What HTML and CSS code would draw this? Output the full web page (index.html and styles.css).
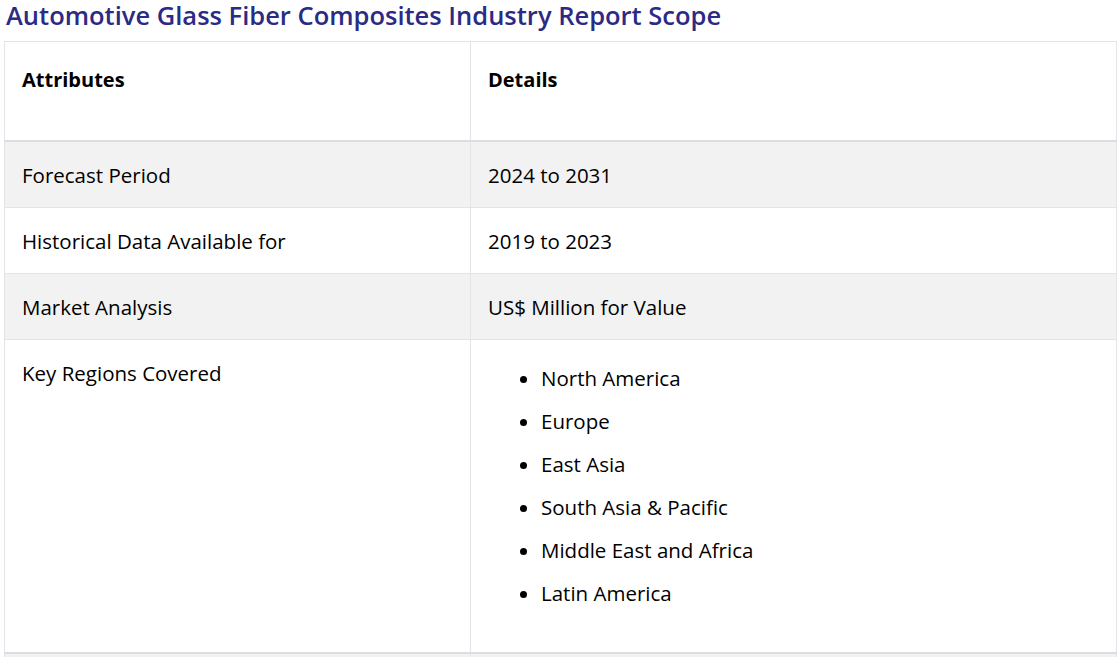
FILE: index.html
```html
<!DOCTYPE html>
<html lang="en">
<head>
<meta charset="utf-8">
<title>Automotive Glass Fiber Composites Industry Report Scope</title>
<link rel="stylesheet" href="styles.css">
</head>
<body>
<div class="page">
  <h2 class="title">Automotive Glass Fiber Composites Industry Report Scope</h2>
  <table class="scope">
    <thead>
      <tr><th class="c1">Attributes</th><th class="c2">Details</th></tr>
    </thead>
    <tbody>
      <tr class="odd"><td>Forecast Period</td><td>2024 to 2031</td></tr>
      <tr><td>Historical Data Available for</td><td>2019 to 2023</td></tr>
      <tr class="odd"><td>Market Analysis</td><td>US$ Million for Value</td></tr>
      <tr><td>Key Regions Covered</td><td>
        <ul class="list">
          <li>North America</li>
          <li>Europe</li>
          <li>East Asia</li>
          <li>South Asia &amp; Pacific</li>
          <li>Middle East and Africa</li>
          <li>Latin America</li>
        </ul>
      </td></tr>
      <tr class="odd next"><td></td><td></td></tr>
    </tbody>
  </table>
</div>
</body>
</html>
```

FILE: styles.css
```css
html, body {
  margin: 0;
  padding: 0;
  background: #ffffff;
}
body {
  font-family: "Open Sans", "Noto Sans", sans-serif;
  color: #000;
  overflow: hidden;
  height: 657px;
}
.page {
  padding: 0 3px 0 4px;
}
.title {
  margin: 0;
  padding: 0 0 0 2px;
  height: 41px;
  font-size: 25.5px;
  line-height: 31px;
  font-weight: 600;
  color: #2b2a85;
}
.scope {
  width: 1113px;
  border-collapse: collapse;
  border: 1px solid #e3e3e8;
  font-size: 20.5px;
}
.scope th, .scope td {
  border: 1px solid #e3e3e8;
  text-align: left;
  vertical-align: top;
  line-height: 30px;
  padding: 18px 17px 17px 17px;
}
.scope th {
  font-weight: 700;
  font-size: 20px;
  padding: 23px 17px 45px 17px;
  border-bottom: 2px solid #dcdde3;
}
.c1 { width: 431px; }
.odd td { background: #f2f2f2; }
.next td {
  height: 30px;
  border-top: 2px solid #dcdde3;
}
.list {
  margin: 5px 0 27px 0;
  padding: 0 0 0 53px;
}
.list li {
  margin: 0 0 13px 0;
  line-height: 30px;
}
```
